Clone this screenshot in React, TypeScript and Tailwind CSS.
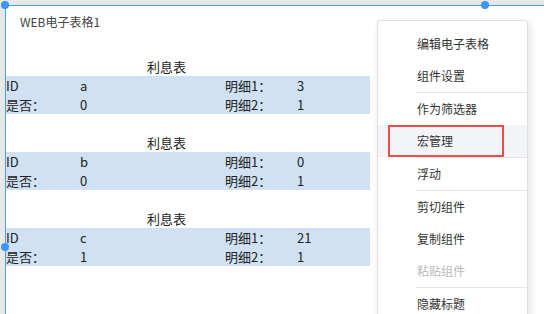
import React from 'react';

interface Sheet {
  id: string;
  flag: string;
  d1: string;
  d2: string;
}

const sheets: Sheet[] = [
  { id: 'a', flag: '0', d1: '3', d2: '1' },
  { id: 'b', flag: '0', d1: '0', d2: '1' },
  { id: 'c', flag: '1', d1: '21', d2: '1' },
];

const menu = [
  { label: '编辑电子表格' },
  { label: '组件设置', sep: true },
  { label: '作为筛选器' },
  { label: '宏管理', hover: true, sep: true },
  { label: '浮动', sep: true },
  { label: '剪切组件' },
  { label: '复制组件' },
  { label: '粘贴组件', disabled: true, sep: true },
  { label: '隐藏标题' },
];

const font = { fontFamily: '"Noto Sans CJK SC", "Noto Sans", sans-serif' };

function Table({ s }: { s: Sheet }) {
  return (
    <div className="w-[364px] text-[13px] leading-[19px] text-[#222]">
      <div className="h-[19px]" />
      <div className="h-[19px] pl-[141px]">利息表</div>
      <div className="bg-[#cfe1f3]">
        <div className="grid grid-cols-[74px_145px_72px_1fr] h-[19px]">
          <span>ID</span>
          <span>{s.id}</span>
          <span>明细1：</span>
          <span>{s.d1}</span>
        </div>
        <div className="grid grid-cols-[74px_145px_72px_1fr] h-[19px]">
          <span>是否：</span>
          <span>{s.flag}</span>
          <span>明细2：</span>
          <span>{s.d2}</span>
        </div>
      </div>
    </div>
  );
}

export default function App() {
  return (
    <div className="relative w-[544px] h-[314px] overflow-hidden bg-[#e8e8e8] pt-[5px] pl-[5px] flex" style={font}>
      {/* component canvas */}
      <div className="flex-1 bg-white border-t border-l border-[#4a9df5]">
        <div className="h-[32px] pt-[6px] pl-[14px] text-[12px] leading-[19px] text-[#444]">WEB电子表格1</div>
        {sheets.map(s => (
          <Table key={s.id} s={s} />
        ))}
      </div>

      {/* selection handles */}
      <div className="absolute left-[1px] top-[1px] w-2 h-2 rounded-full bg-[#3e95f6]" />
      <div className="absolute left-[481px] top-[1px] w-2 h-2 rounded-full bg-[#3e95f6]" />
      <div className="absolute left-[1px] top-[243px] w-2 h-2 rounded-full bg-[#3e95f6]" />

      {/* context menu */}
      <div className="absolute left-[377px] top-[20px] w-[151px] h-[320px] bg-white border border-[#dcdde6] rounded-[3px] shadow-[2px_3px_8px_rgba(0,0,0,0.12)] pt-[7px] text-[12px]">
        {menu.map(m => (
          <div key={m.label}>
            <div
              className={`h-[32px] flex items-center pl-[39px] ${m.hover ? 'bg-[#f3f4f8]' : ''} ${m.disabled ? 'text-[#b8b8b8]' : 'text-[#333]'}`}
            >
              {m.label}
            </div>
            {m.sep && <div className="ml-[38px] h-px bg-[#e4e5ec]" />}
          </div>
        ))}
        <div className="absolute left-[10px] top-[104px] w-[116px] h-[32px] border-2 border-[#f34a4a]" />
      </div>
    </div>
  );
}
